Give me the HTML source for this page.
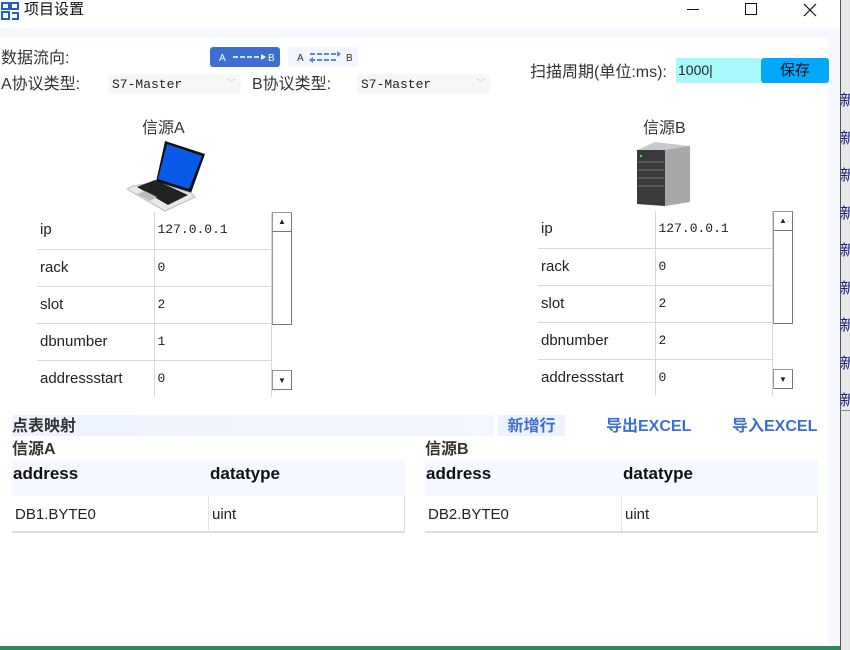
<!DOCTYPE html>
<html><head><meta charset="utf-8"><style>
*{margin:0;padding:0;box-sizing:border-box}
body{width:850px;height:650px;overflow:hidden;background:#fff;font-family:"Liberation Sans","Noto Sans CJK SC",sans-serif;position:relative;color:#222;line-height:1.2}
.a{position:absolute}
.mono{font-family:"Liberation Mono","Noto Sans CJK SC",monospace}
.tb td{border-bottom:1px solid #d8d8d8;border-right:1px solid #d8d8d8;height:37px;font-size:15px;padding-left:3px}
.xin{position:absolute;left:840px;font-size:15px;color:#1a237e}
.sb{position:absolute;width:20px;background:#fff;border:1px solid #999;border-right-color:#777;border-bottom-color:#777}
</style></head><body>
<div class="a" style="left:840px;top:0;width:10px;height:650px;background:#e8e8ea;border-left:1px solid #555"></div>
<div class="xin" style="top:92px">新</div><div class="xin" style="top:130px">新</div><div class="xin" style="top:167px">新</div><div class="xin" style="top:205px">新</div><div class="xin" style="top:242px">新</div><div class="xin" style="top:280px">新</div><div class="xin" style="top:317px">新</div><div class="xin" style="top:355px">新</div><div class="xin" style="top:392px">新</div>
<div class="a" style="left:840px;top:410px;width:10px;height:1px;background:#888"></div>
<div class="a" style="left:0;top:28px;width:840px;height:620px;background:#f5f8fd"></div>
<div class="a" style="left:0;top:38px;width:828px;height:609px;background:#fff"></div>
<div class="a" style="left:0;top:646px;width:840px;height:4px;background:#2e8b57"></div>
<svg class="a" style="left:1px;top:2px" width="18" height="18" viewBox="0 0 18 18"><rect x="1" y="1" width="7" height="6" fill="none" stroke="#1e5fc9" stroke-width="2"/><rect x="10" y="1" width="7" height="6" fill="none" stroke="#1e5fc9" stroke-width="2"/><rect x="1" y="10" width="7" height="7" fill="none" stroke="#1e5fc9" stroke-width="2"/><path d="M11 11h6v6h-6" fill="none" stroke="#1e5fc9" stroke-width="2"/></svg>
<div class="a" style="left:24px;top:1px;font-size:15px;color:#111">项目设置</div>
<div class="a" style="left:687px;top:9px;width:12px;height:1px;background:#111"></div>
<div class="a" style="left:745px;top:3px;width:12px;height:12px;border:1px solid #111"></div>
<svg class="a" style="left:803px;top:3px" width="14" height="14"><path d="M1 1L13 13M13 1L1 13" stroke="#111" stroke-width="1.2"/></svg>
<div class="a" style="left:1px;top:49px;font-size:16px;color:#333">数据流向:</div>
<svg class="a" style="left:210px;top:47px" width="70" height="20"><rect width="70" height="20" rx="3" fill="#3d6fd2"/><text x="9" y="14" font-size="10" fill="#fff" font-family="Liberation Sans">A</text><path d="M23 10H52" stroke="#cfe0ff" stroke-width="2" stroke-dasharray="5 2"/><path d="M51 7L56 10L51 13Z" fill="#fff"/><text x="58" y="14" font-size="10" fill="#fff" font-family="Liberation Sans">B</text></svg>
<svg class="a" style="left:288px;top:47px" width="70" height="20"><rect width="70" height="20" rx="3" fill="#f3f6fc"/><text x="9" y="14" font-size="10" fill="#333" font-family="Liberation Sans">A</text><path d="M22 7H50M22 13H50" stroke="#5b86d8" stroke-width="2" stroke-dasharray="5 2"/><path d="M49 4L53 7L49 10Z" fill="#5b86d8"/><path d="M25 10L21 13L25 16Z" fill="#5b86d8"/><text x="58" y="14" font-size="10" fill="#333" font-family="Liberation Sans">B</text></svg>
<div class="a" style="left:1px;top:75px;font-size:16px;color:#333">A协议类型:</div>
<div class="a mono" style="left:108px;top:74px;width:133px;height:20px;background:#f7f7f7;border-radius:3px;font-size:13px;line-height:21px;padding-left:4px">S7-Master<span style="position:absolute;right:5px;color:#ccc;font-size:9px">﹀</span></div>
<div class="a" style="left:252px;top:75px;font-size:16px;color:#333">B协议类型:</div>
<div class="a mono" style="left:357px;top:74px;width:133px;height:20px;background:#f7f7f7;border-radius:3px;font-size:13px;line-height:21px;padding-left:4px">S7-Master<span style="position:absolute;right:5px;color:#ccc;font-size:9px">﹀</span></div>
<div class="a" style="left:530px;top:63px;font-size:16px;color:#333">扫描周期(单位:ms):</div>
<div class="a" style="left:676px;top:58px;width:85px;height:25px;background:#a8fafc;border-radius:2px;font-size:14px;line-height:25px;padding-left:2px">1000|</div>
<div class="a" style="left:761px;top:58px;width:68px;height:25px;background:#00a8ff;border-radius:3px;font-size:15px;line-height:25px;text-align:center;color:#111">保存</div>
<div class="a" style="left:142px;top:119px;font-size:16px;color:#333">信源A</div>
<svg class="a" style="left:125px;top:137px" width="82" height="76" viewBox="0 0 82 76"><path d="M40 4L80 17L66 56L31 45Z" fill="#111"/><path d="M42 7L77 19L64 52L33 42Z" fill="#0a5ae8"/><path d="M31 45L66 56L70 60L40 74L2 52L8 49Z" fill="#e9e9e9" stroke="#bbb"/><path d="M12 50L30 43L63 58L43 68Z" fill="#222"/><path d="M12 57L20 54L32 60L25 64Z" fill="#bbb"/></svg>
<div class="a" style="left:643px;top:119px;font-size:16px;color:#333">信源B</div>
<svg class="a" style="left:635px;top:140px" width="60" height="68" viewBox="0 0 60 68"><path d="M2 10L20 2L55 6L55 62L30 66L2 64Z" fill="#c9c9c9"/><path d="M30 10L55 6L55 62L30 66Z" fill="#a8a8aa"/><path d="M2 10L30 10L30 66L2 64Z" fill="#3a3a3c"/><rect x="5" y="15" width="2" height="2" fill="#3f3"/><path d="M3 22H29M3 30H29M3 38H29M3 46H29" stroke="#777"/></svg>
<table class="a tb" style="left:37px;top:212px;width:235px;border-collapse:collapse">
<tr><td style="width:117px">ip</td><td class="mono" style="font-size:13px">127.0.0.1</td></tr>
<tr><td>rack</td><td class="mono" style="font-size:13px">0</td></tr>
<tr><td>slot</td><td class="mono" style="font-size:13px">2</td></tr>
<tr><td>dbnumber</td><td class="mono" style="font-size:13px">1</td></tr>
<tr><td style="border-bottom:none">addressstart</td><td class="mono" style="font-size:13px;border-bottom:none">0</td></tr></table>
<div class="sb" style="left:272px;top:212px;height:113px"></div>
<div class="sb" style="left:272px;top:212px;height:20px;font-size:8px;text-align:center;line-height:18px">▲</div>
<div class="sb" style="left:272px;top:370px;height:20px;font-size:8px;text-align:center;line-height:20px">▼</div>
<table class="a tb" style="left:538px;top:211px;width:235px;border-collapse:collapse">
<tr><td style="width:117px">ip</td><td class="mono" style="font-size:13px">127.0.0.1</td></tr>
<tr><td>rack</td><td class="mono" style="font-size:13px">0</td></tr>
<tr><td>slot</td><td class="mono" style="font-size:13px">2</td></tr>
<tr><td>dbnumber</td><td class="mono" style="font-size:13px">2</td></tr>
<tr><td style="border-bottom:none">addressstart</td><td class="mono" style="font-size:13px;border-bottom:none">0</td></tr></table>
<div class="sb" style="left:773px;top:211px;height:113px"></div>
<div class="sb" style="left:773px;top:211px;height:20px;font-size:8px;text-align:center;line-height:18px">▲</div>
<div class="sb" style="left:773px;top:369px;height:20px;font-size:8px;text-align:center;line-height:20px">▼</div>
<div class="a" style="left:12px;top:415px;width:482px;height:21px;background:linear-gradient(90deg,#edf3fd,#f3f7fe)"></div>
<div class="a" style="left:12px;top:417px;font-size:16px;font-weight:bold;color:#333">点表映射</div>
<div class="a" style="left:498px;top:415px;width:67px;height:21px;background:#edf3fd"></div>
<div class="a" style="left:498px;top:417px;width:67px;color:#3d6fd2;font-weight:bold;font-size:16px;text-align:center">新增行</div>
<div class="a" style="left:606px;top:417px;color:#3d6fd2;font-weight:bold;font-size:16px">导出EXCEL</div>
<div class="a" style="left:732px;top:417px;color:#3d6fd2;font-weight:bold;font-size:16px">导入EXCEL</div>
<div class="a" style="left:12px;top:440px;font-size:16px;font-weight:bold;color:#333">信源A</div>
<div class="a" style="left:425px;top:440px;font-size:16px;font-weight:bold;color:#333">信源B</div>
<div class="a" style="left:12px;top:460px;width:393px;height:36px;background:#f5f8ff"></div>
<div class="a" style="left:13px;top:464px;font-size:17px;font-weight:bold;color:#111">address</div>
<div class="a" style="left:210px;top:464px;font-size:17px;font-weight:bold;color:#111">datatype</div>
<div class="a" style="left:12px;top:496px;width:393px;height:37px;border-right:1px solid #ddd;border-bottom:2px solid #ddd"></div>
<div class="a" style="left:208px;top:496px;width:1px;height:37px;background:#e4e4e4"></div>
<div class="a" style="left:15px;top:506px;font-size:15px">DB1.BYTE0</div>
<div class="a" style="left:212px;top:506px;font-size:15px">uint</div>
<div class="a" style="left:425px;top:460px;width:393px;height:36px;background:#f5f8ff"></div>
<div class="a" style="left:426px;top:464px;font-size:17px;font-weight:bold;color:#111">address</div>
<div class="a" style="left:623px;top:464px;font-size:17px;font-weight:bold;color:#111">datatype</div>
<div class="a" style="left:425px;top:496px;width:393px;height:37px;border-right:1px solid #ddd;border-bottom:2px solid #ddd"></div>
<div class="a" style="left:621px;top:496px;width:1px;height:37px;background:#e4e4e4"></div>
<div class="a" style="left:428px;top:506px;font-size:15px">DB2.BYTE0</div>
<div class="a" style="left:625px;top:506px;font-size:15px">uint</div>
</body></html>
